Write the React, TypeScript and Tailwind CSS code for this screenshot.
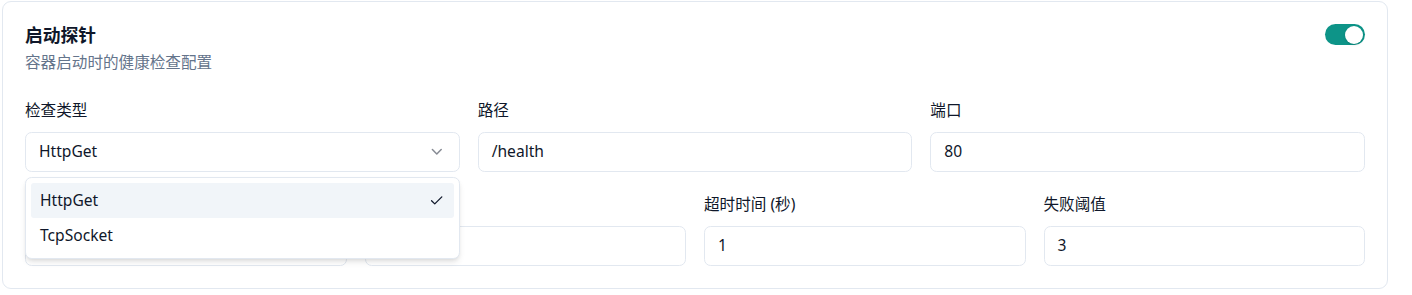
import { Check, ChevronDown } from "lucide-react";

const font = {
  fontFamily: '"Noto Sans", "Noto Sans CJK SC", sans-serif',
};

function Field({
  label,
  value,
  children,
}: {
  label: string;
  value?: string;
  children?: React.ReactNode;
}) {
  return (
    <div className="relative flex flex-col">
      <label className="h-[22px] text-[15.6px] leading-[22px] text-[#0f172a]">{label}</label>
      {children ?? (
        <div className="mt-[11px] flex h-[40px] items-center rounded-[6.6px] border border-[#e2e8f0] bg-white px-[13px] text-[15.6px] text-[#0f172a]">
          {value}
        </div>
      )}
    </div>
  );
}

function SelectField() {
  return (
    <Field label="检查类型">
      <div className="mt-[11px] flex h-[40px] items-center justify-between rounded-[6.6px] border border-[#e2e8f0] bg-white px-[13px] text-[15.6px] text-[#0f172a]">
        <span>HttpGet</span>
        <ChevronDown className="h-[17.6px] w-[17.6px] text-[#0f172a] opacity-50" strokeWidth={2} />
      </div>
      <div className="absolute left-0 right-0 top-[78px] z-10 rounded-[6.6px] border border-[#e2e8f0] bg-white p-[5px] shadow-md">
        <div className="relative flex h-[35px] items-center rounded-[3px] bg-[#f1f5f9] pl-[9px] text-[15.6px] text-[#0f172a]">
          HttpGet
          <Check className="absolute right-[9px] h-[15.4px] w-[15.4px]" strokeWidth={2} />
        </div>
        <div className="flex h-[35px] items-center rounded-[3px] pl-[9px] text-[15.6px] text-[#0f172a]">
          TcpSocket
        </div>
      </div>
    </Field>
  );
}

export default function App() {
  return (
    <div className="bg-white pl-[2px] pt-[1px]" style={font}>
      <div className="w-[1386px] rounded-[9px] border border-[#e2e8f0] bg-white px-[22px] pb-[22px] pt-[22px]">
        <div className="flex items-start justify-between">
          <div>
            <h2 className="text-[17.8px] font-bold leading-[22px] text-[#0f172a]">启动探针</h2>
            <p className="mt-[5px] text-[15.6px] leading-[22px] text-[#64748b]">容器启动时的健康检查配置</p>
          </div>
          <div className="flex h-[21px] w-[40px] items-center justify-end rounded-full bg-[#0d9488] pr-[2px]">
            <div className="h-[18px] w-[18px] rounded-full bg-white shadow-sm" />
          </div>
        </div>

        <div className="mt-[26px] grid grid-cols-3 gap-x-[18px]">
          <SelectField />
          <Field label="路径" value="/health" />
          <Field label="端口" value="80" />
        </div>

        <div className="mt-[21px] grid grid-cols-4 gap-x-[18px]">
          <Field label="初始延迟 (秒)" value="10" />
          <Field label="检查间隔 (秒)" value="10" />
          <Field label="超时时间 (秒)" value="1" />
          <Field label="失败阈值" value="3" />
        </div>
      </div>
    </div>
  );
}
